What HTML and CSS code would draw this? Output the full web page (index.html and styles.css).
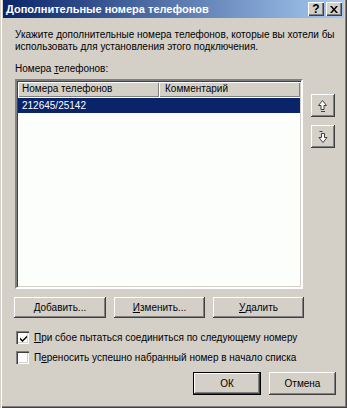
FILE: index.html
```html
<!DOCTYPE html>
<html>
<head>
<meta charset="utf-8">
<link rel="stylesheet" href="styles.css">
</head>
<body>
<div class="window">
  <div class="titlebar">
    <span class="title">Дополнительные номера телефонов</span>
    <div class="tbtns">
      <span class="tbtn help">?</span>
      <span class="tbtn close"><svg width="8" height="7" viewBox="0 0 8 7"><path d="M0 0h2l2 2.5L6 0h2L5 3.5 8 7H6L4 4.5 2 7H0l3-3.5z" fill="#000"/></svg></span>
    </div>
  </div>
  <div class="content">
    <p class="intro">Укажите дополнительные номера телефонов, которые вы хотели бы<br>использовать для установления этого подключения.</p>
    <div class="label">Номера <u>т</u>елефонов:</div>
    <div class="main">
      <div class="list">
        <div class="header">
          <div class="hcol c1">Номера телефонов</div>
          <div class="hcol c2">Комментарий</div>
        </div>
        <div class="row selected"><span class="cell">212645/25142</span></div>
      </div>
      <div class="side">
        <button class="btn arrow"><svg width="12" height="14" viewBox="0 0 12 14"><path d="M5.5 1.5 L1.5 6.5 H4 V10.5 H7 V6.5 H9.5 Z" fill="#fff" stroke="#404040" stroke-width="1"/><path d="M4 12.5 H8" stroke="#404040"/></svg></button>
        <button class="btn arrow"><svg width="12" height="14" viewBox="0 0 12 14"><path d="M2.5 1.5 H5.5" stroke="#404040"/><path d="M4.5 3.5 V7.5 H2 L6 12.5 L10 7.5 H7.5 V3.5 Z" fill="#fff" stroke="#404040" stroke-width="1"/></svg></button>
      </div>
    </div>
    <div class="actions">
      <button class="btn act w1"><u>Д</u>обавить...</button>
      <button class="btn act w2"><u>И</u>зменить...</button>
      <button class="btn act w3"><u>У</u>далить</button>
    </div>
    <div class="check">
      <span class="box"><svg width="9" height="9" viewBox="0 0 9 9"><path d="M1 3.5 L3.5 6 L8 1.5 V3.5 L3.5 8 L1 5.5 Z" fill="#000"/></svg></span>
      <span><u>П</u>ри сбое пытаться соединиться по следующему номеру</span>
    </div>
    <div class="check second">
      <span class="box"></span>
      <span>П<u>е</u>реносить успешно набранный номер в начало списка</span>
    </div>
    <div class="footer">
      <button class="btn default">ОК</button>
      <button class="btn cancel">Отмена</button>
    </div>
  </div>
</div>
</body>
</html>
```
FILE: styles.css
```css
* { box-sizing: border-box; }
html, body { margin: 0; padding: 0; }
body { width: 347px; height: 408px; overflow: hidden; background: #d4d0c8; font-family: "Liberation Sans", Arial, sans-serif; font-size: 10px; color: #000; }
.window {
  width: 347px; height: 408px; background: #d4d0c8;
  padding: 0 3px 3px 3px;
  box-shadow: inset 1px 0 0 #d4d0c8, inset 2px 0 0 #fff, inset -1px -1px 0 #404040, inset -2px -2px 0 #808080;
  display: flex; flex-direction: column;
}
.titlebar {
  height: 18px; display: flex; align-items: center; justify-content: space-between;
  background: linear-gradient(to right, #0a246a, #a6caf0);
  padding: 0 2px 0 3px;
}
.title { color: #fff; font-weight: bold; font-size: 11px; font-family: "Liberation Sans", Arial, sans-serif; }
.tbtns { display: flex; gap: 2px; }
.tbtn {
  width: 16px; height: 14px; background: #d4d0c8; display: flex; align-items: center; justify-content: center;
  box-shadow: inset 1px 1px 0 #fff, inset -1px -1px 0 #404040, inset -2px -2px 0 #808080;
  font-weight: bold; font-size: 12px; line-height: 1;
}
.content { padding: 0 0 0 12px; display: flex; flex-direction: column; }
.intro { margin: 11px 0 0 0; line-height: 12px; white-space: nowrap; }
.label { margin-top: 10px; line-height: 12px; }
.main { display: flex; gap: 8px; margin-top: 4px; }
.list {
  width: 288px; height: 210px; background: #fcfefc;
  border: 2px solid; border-color: #808080 #fff #fff #808080;
  box-shadow: inset 1px 1px 0 #404040, inset -1px -1px 0 #d4d0c8;
  padding: 1px 1px;
}
.header { display: flex; height: 15px; }
.hcol {
  height: 15px; line-height: 14px; padding-left: 4px; background: #d4d0c8;
  box-shadow: inset 1px 1px 0 #fff, inset -1px -1px 0 #808080;
}
.c1 { width: 141px; }
.c2 { flex: 1; padding-left: 6px; }
.row { height: 15px; line-height: 15px; margin-top: 1px; }
.selected { background: #0a246a; color: #fff; }
.cell { padding-left: 4px; }
.side { display: flex; flex-direction: column; gap: 8px; padding-top: 15px; }
.btn {
  font: inherit; color: #000; background: #d4d0c8; border: 0; padding: 0; margin: 0;
  box-shadow: inset -1px -1px 0 #404040, inset 1px 1px 0 #fff, inset -2px -2px 0 #808080, inset 2px 2px 0 #d4d0c8;
  display: flex; align-items: center; justify-content: center;
}
.arrow { width: 24px; height: 23px; }
.actions { display: flex; gap: 8px; margin-top: 8px; margin-left: -1px; }
.act { height: 21px; }
.w1 { width: 92px; } .w2 { width: 91px; } .w3 { width: 91px; }
.check { display: flex; align-items: center; gap: 5px; margin-top: 13px; margin-left: 1px; height: 13px; }
.check.second { margin-top: 7px; }
.box {
  width: 13px; height: 13px; background: #fff; display: flex; align-items: center; justify-content: center;
  box-shadow: inset 1px 1px 0 #808080, inset 2px 2px 0 #404040, inset -1px -1px 0 #fff, inset -2px -2px 0 #d4d0c8;
  padding: 1px 0 0 1px;
}
.footer { display: flex; gap: 8px; margin-top: 8px; padding-left: 178px; }
.default { width: 68px; height: 23px; box-shadow: inset 0 0 0 1px #000, inset -2px -2px 0 #404040, inset 2px 2px 0 #fff, inset -3px -3px 0 #808080; }
.cancel { width: 67px; height: 23px; }
u { text-decoration: underline; }
```
